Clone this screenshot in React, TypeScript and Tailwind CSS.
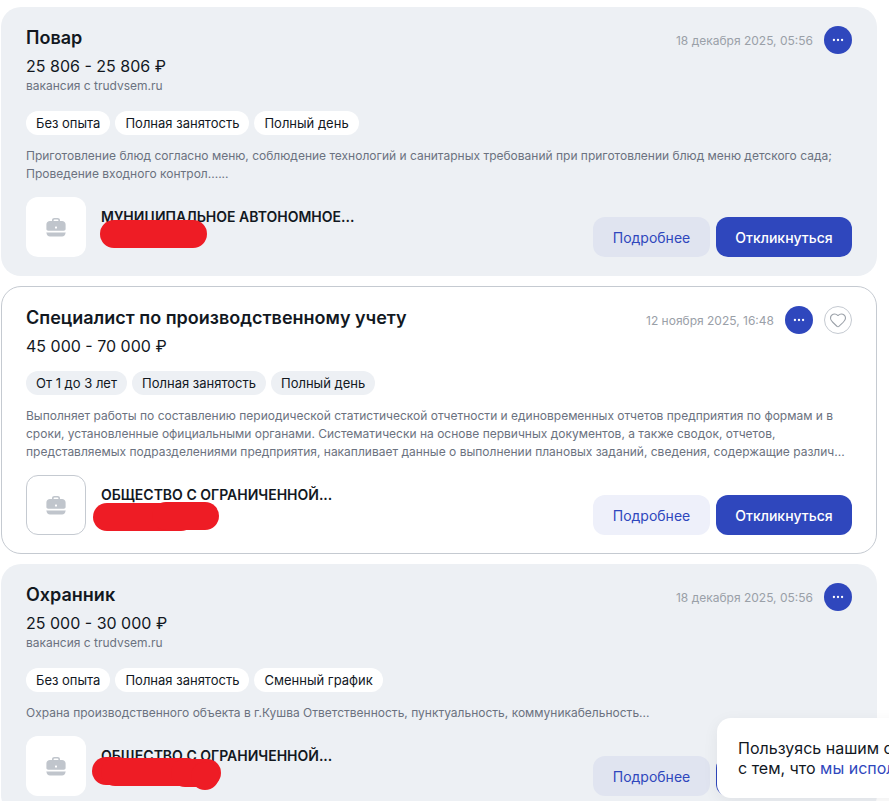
import { Ellipsis, Heart } from "lucide-react";

interface Vacancy {
  title: string;
  salary: string;
  source?: string;
  date: string;
  tags: string[];
  description: string[];
  company: string;
  favorite?: boolean;
  outlined?: boolean;
  blobs: string[];
}

const vacancies: Vacancy[] = [
  {
    title: "Повар",
    salary: "25 806 - 25 806 ₽",
    source: "вакансия с trudvsem.ru",
    date: "18 декабря 2025, 05:56",
    tags: ["Без опыта", "Полная занятость", "Полный день"],
    description: [
      "Приготовление блюд согласно меню, соблюдение технологий и санитарных требований при приготовлении блюд меню детского сада;",
      "Проведение входного контрол......",
    ],
    company: "МУНИЦИПАЛЬНОЕ АВТОНОМНОЕ...",
    blobs: ["left-[99px] top-[213px] w-[107px] h-[28px]"],
  },
  {
    title: "Специалист по производственному учету",
    salary: "45 000 - 70 000 ₽",
    date: "12 ноября 2025, 16:48",
    tags: ["От 1 до 3 лет", "Полная занятость", "Полный день"],
    description: [
      "Выполняет работы по составлению периодической статистической отчетности и единовременных отчетов предприятия по формам и в",
      "сроки, установленные официальными органами. Систематически на основе первичных документов, а также сводок, отчетов,",
      "представляемых подразделениями предприятия, накапливает данные о выполнении плановых заданий, сведения, содержащие различ...",
    ],
    company: "ОБЩЕСТВО С ОГРАНИЧЕННОЙ...",
    favorite: true,
    outlined: true,
    blobs: [
      "left-[91px] top-[216px] w-[102px] h-[28px]",
      "left-[150px] top-[215px] w-[67px] h-[28px]",
    ],
  },
  {
    title: "Охранник",
    salary: "25 000 - 30 000 ₽",
    source: "вакансия с trudvsem.ru",
    date: "18 декабря 2025, 05:56",
    tags: ["Без опыта", "Полная занятость", "Сменный график"],
    description: ["Охрана производственного объекта в г.Кушва Ответственность, пунктуальность, коммуникабельность..."],
    company: "ОБЩЕСТВО С ОГРАНИЧЕННОЙ...",
    blobs: [
      "left-[91px] top-[193px] w-[40px] h-[28px]",
      "left-[100px] top-[194px] w-[100px] h-[28px]",
      "left-[170px] top-[195px] w-[50px] h-[28px]",
      "left-[190px] top-[198px] w-[28px] h-[28px]",
    ],
  },
];

const BagIcon = () => (
  <svg width="20" height="21" viewBox="0 0 20 21" fill="#c0c5cc">
    <path d="M6 4.500V3.200C6 1.800 7 1 8.400 1h3.200C13 1 14 1.800 14 3.200v1.300h-1.600V3.400c0-.5-.4-.8-.9-.8h-3c-.5 0-.9.300-.9.800v1.100H6z" />
    <path d="M4 4h12c2 0 3.600 1.500 3.600 3.500v4.600c0 1-.8 1.700-1.800 1.700H2.200c-1 0-1.800-.7-1.800-1.700V7.500C.4 5.500 2 4 4 4z" />
    <path d="M.5 15.200c.5.300 1 .4 1.700.4h15.600c.7 0 1.200-.1 1.700-.4v.8c0 1.900-1.500 3.400-3.500 3.400H4c-2 0-3.500-1.500-3.500-3.400v-.8z" />
    <rect x="9" y="9.500" width="2" height="2" rx=".5" fill="#ffffff" />
  </svg>
);

const VacancyCard = ({ vacancy }: { vacancy: Vacancy }) => (
  <div
    className={`relative rounded-[20px] ${
      vacancy.outlined
        ? "bg-white border border-[#c5cad1] pt-[17px] pr-[24px] pb-[18px] pl-[24px]"
        : "bg-[#edf0f4] pt-[17px] pr-[25px] pb-[19px] pl-[25px]"
    }`}
  >
    <div className="flex items-start justify-between">
      <div>
        <h3 className="text-[18px] leading-[28px] font-semibold text-[#12181f]">{vacancy.title}</h3>
        <div className="mt-[2px] text-[16px] leading-[24px] text-[#12181f]">{vacancy.salary}</div>
        {vacancy.source && (
          <div className="mb-[4px] text-[12px] leading-[16px] text-[#6b7280]">{vacancy.source}</div>
        )}
      </div>
      <div className="flex items-center gap-[11px] pt-[2px]">
        <span className="relative top-[1px] text-[12px] text-[#9aa0a8]">{vacancy.date}</span>
        <button className="flex size-[28px] items-center justify-center rounded-full bg-[#2f47bd] text-white">
          <Ellipsis size={14} strokeWidth={2} />
        </button>
        {vacancy.favorite && (
          <button className="flex size-[28px] items-center justify-center rounded-full border border-[#c5cad1] text-[#9aa0a8]">
            <Heart size={18} strokeWidth={1.4} />
          </button>
        )}
      </div>
    </div>

    <div className="mt-[13px] flex gap-[5px]">
      {vacancy.tags.map((tag) => (
        <span
          key={tag}
          className={`h-[24px] rounded-full px-[10px] text-[13px] leading-[24px] text-[#12181f] ${
            vacancy.outlined ? "bg-[#edf0f4]" : "bg-white"
          }`}
        >
          {tag}
        </span>
      ))}
    </div>

    <div className="mt-[12px] text-[12px] leading-[18px] text-[#6b7280]">
      {vacancy.description.map((line) => (
        <div key={line} className="whitespace-nowrap">
          {line}
        </div>
      ))}
    </div>

    <div className="mt-[14px] flex items-end justify-between">
      <div className="flex gap-[15px]">
        <div
          className={`flex size-[60px] items-center justify-center rounded-[12px] bg-white ${
            vacancy.outlined ? "border border-[#c5cad1]" : ""
          }`}
        >
          <BagIcon />
        </div>
        <div className="pt-[11px] text-[14px] leading-[18px] font-semibold text-[#12181f]">{vacancy.company}</div>
      </div>
      <div className="flex gap-[6px]">
        <button
          className={`h-[40px] w-[117px] rounded-[12px] text-[14px] text-[#2f47bd] ${
            vacancy.outlined ? "bg-[#eef0fa]" : "bg-[#e0e4f0]"
          }`}
        >
          Подробнее
        </button>
        <button className="h-[40px] w-[136px] rounded-[12px] bg-[#2f47bd] text-[14px] font-medium text-white">
          Откликнуться
        </button>
      </div>
    </div>

    {vacancy.blobs.map((blob) => (
      <div key={blob} className={`absolute rounded-full bg-[#ee1c25] ${blob}`} />
    ))}
  </div>
);

export default function App() {
  return (
    <div className="relative h-[801px] w-[889px] overflow-hidden bg-white font-['Inter',sans-serif]">
      <div className="box-content flex w-[876px] flex-col gap-[10px] pt-[7px] pl-[1px]">
        {vacancies.map((vacancy) => (
          <VacancyCard key={vacancy.title} vacancy={vacancy} />
        ))}
      </div>

      <div className="absolute left-[717px] top-[718px] h-[80px] w-[300px] rounded-[14px] bg-white px-[21px] py-[20px] text-[16px] leading-[20px] text-[#12181f] shadow-[0_4px_16px_rgba(0,0,0,0.06)]">
        <div className="whitespace-nowrap">Пользуясь нашим сайтом, вы соглашаетесь</div>
        <div className="whitespace-nowrap">
          с тем, что <span className="text-[#2f47bd]">мы используем cookies</span>
        </div>
      </div>
    </div>
  );
}
